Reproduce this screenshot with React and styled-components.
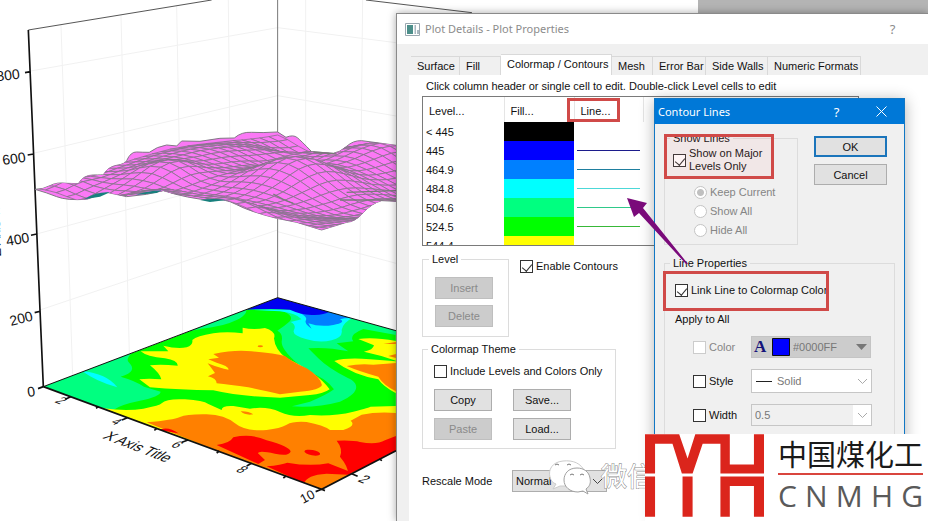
import React from "react";
import styled, { createGlobalStyle, css } from "styled-components";

const GlobalStyle = createGlobalStyle`
  * {
    box-sizing: border-box;
  }
  body {
    margin: 0;
    overflow: hidden;
    background: #fff;
  }
  body, button, input, select {
    font-family: "Liberation Sans", Arial, sans-serif;
    font-size: 11px;
    line-height: 14px;
    color: #111;
  }
`;

const Desktop = styled.main`
  position: relative;
  min-height: 100vh;
  overflow: hidden;
`;
const Drawing = styled.svg`
  position: absolute;
  top: 0;
  left: 0;
  overflow: visible;
  pointer-events: none;
`;
const Backdrop = styled.div`
  height: 13px;
  margin-left: 698px;
  background: #b4b4b4;
`;

const Window = styled.section`
  position: absolute;
  display: flex;
  flex-direction: column;
  background: #f0f0f0;
`;
const PlotWindow = styled(Window)`
  top: 13px;
  left: 396px;
  right: 0;
  bottom: 0;
  border: solid #8a8a8a;
  border-width: 1px 0 0 1px;
  box-shadow: 0 0 8px rgba(0, 0, 0, 0.35);
`;
const ContourWindow = styled(Window)`
  top: 98px;
  left: 654px;
  width: 251px;
  bottom: 0;
  border: 1px solid #1177c4;
  box-shadow: 0 2px 14px rgba(0, 0, 0, 0.3);
`;
const TitleBar = styled.header`
  display: flex;
  align-items: center;
  flex: none;
  height: ${props => (props.$active ? 25 : 30)}px;
  padding-left: ${props => (props.$active ? 3 : 8)}px;
  gap: 5px;
  background: ${props => (props.$active ? "#0078d7" : "#fff")};
  color: ${props => (props.$active ? "#fff" : "#8c8c8c")};
`;
const Title = styled.h1`
  flex: 1;
  margin: 0;
  font: 11px/16px "Noto Sans", "Open Sans", sans-serif;
`;
const TitleButton = styled.button`
  display: flex;
  align-items: center;
  justify-content: center;
  width: 45px;
  height: 25px;
  margin: 0 ${props => (props.$inset ? 13 : 0)}px 0 -5px;
  padding: 0;
  border: 0;
  background: none;
  color: inherit;
  font: 13px/16px "Noto Sans", sans-serif;
`;

const PlotBody = styled.div`
  display: flex;
  flex-direction: column;
  flex: 1;
  padding: 10px 0 0 12px;
`;
const Tabs = styled.div`
  display: flex;
  align-items: flex-end;
  height: 21px;
  padding-left: 2px;
`;
const Tab = styled.button`
  width: ${props => props.$width}px;
  height: 19px;
  padding: 0 0 0 6px;
  border: solid #d9d9d9;
  border-width: 1px 1px 0 0;
  background: #f0f0f0;
  text-align: left;
  white-space: nowrap;
  ${props =>
    props.$selected &&
    css`
      height: 21px;
      padding-bottom: 2px;
      background: #fff;
    `}
`;
const Panel = styled.div`
  flex: 1;
  padding: 4px 69px 0 13px;
  background: #fff;
`;
const Hint = styled.p`
  margin: 0 0 3px 4px;
  white-space: nowrap;
`;

const LevelList = styled.div`
  height: 150px;
  overflow: hidden;
  border: 1px solid #7a7a7a;
`;
const LevelTable = styled.table`
  border-collapse: collapse;
  table-layout: fixed;
  width: 220px;
`;
const HeadCell = styled.th`
  width: ${props => props.$width}px;
  height: 25px;
  padding: 2px 6px 0;
  border-right: 1px solid #e5e5e5;
  font-weight: normal;
  text-align: left;
`;
const LevelCell = styled.td`
  height: 19px;
  padding: 0 3px;
`;
const FillCell = styled(LevelCell)`
  background: ${props => props.$color};
`;
const LineSample = styled.hr`
  height: 1px;
  margin: 0;
  border: 0;
  background: ${props => props.$color};
`;

const Row = styled.div`
  display: flex;
  align-items: flex-start;
  gap: ${props => props.$gap || 0}px;
`;
const Group = styled.fieldset`
  min-width: 0;
  margin: 0;
  padding: 0 11px 8px;
  border: 1px solid #dcdcdc;
`;
const LevelGroup = styled(Group)`
  display: flex;
  flex-direction: column;
  gap: 6px;
  width: 87px;
  margin-top: 6px;
  padding: 11px 12px 9px;
`;
const ThemeGroup = styled(Group)`
  width: 194px;
  margin-top: 5px;
  padding-top: 9px;
`;
const ShowGroup = styled(Group)`
  width: 134px;
  padding: 2px 0 7px 8px;
`;
const LineGroup = styled(Group)`
  margin: 11px 0 0;
  height: 300px;
  padding: 14px 0 0 10px;
`;
const Legend = styled.legend`
  margin-left: ${props => props.$shift || 0}px;
  padding: 0 3px;
`;
const EnableField = styled.div`
  margin-top: 14px;
`;

const PushButton = styled.button`
  width: ${props => (props.$wide ? 73 : 58)}px;
  height: ${props => (props.$wide ? 21 : 22)}px;
  padding: 0;
  border: ${props => (props.$main ? "2px solid #1b75bb" : "1px solid #adadad")};
  background: #e1e1e1;
  &:disabled {
    border-color: #bfbfbf;
    background: #ccc;
    color: #8a8a8a;
  }
`;
const ButtonGrid = styled.div`
  display: grid;
  grid-template-columns: 58px 58px;
  gap: 7px 21px;
  margin-top: 11px;
`;
const ButtonColumn = styled.div`
  display: flex;
  flex-direction: column;
  gap: 7px;
  margin-top: 5px;
`;

const CheckLabel = styled.label`
  display: flex;
  align-items: center;
  gap: 3px;
  line-height: 13px;
  color: ${props => (props.$off ? "#858585" : "#111")};
`;
const CheckBox = styled.input.attrs({ type: "checkbox" })`
  appearance: none;
  position: relative;
  flex: none;
  width: 13px;
  height: 13px;
  margin: 0;
  border: 1px solid #333;
  background: #fff;
  &:checked::after {
    content: "";
    position: absolute;
    top: 1px;
    left: 3px;
    width: 5px;
    height: 8px;
    border: solid #333;
    border-width: 0 1px 1px 0;
    transform: rotate(40deg);
  }
  &:disabled {
    border-color: #ccc;
  }
`;
const RadioList = styled.div`
  display: flex;
  flex-direction: column;
  gap: 6px;
  margin: 13px 0 0 21px;
`;
const Radio = styled.input.attrs({ type: "radio" })`
  appearance: none;
  flex: none;
  width: 13px;
  height: 13px;
  margin: 0;
  border: 1px solid #c4c4c4;
  border-radius: 50%;
  background: #fff;
  &:checked {
    background: radial-gradient(#c0c0c0 0 3px, #fff 4px);
  }
`;

const Rescale = styled.div`
  display: flex;
  align-items: center;
  margin-top: 21px;
`;
const RescaleLabel = styled.label`
  width: 90px;
`;
const Picker = styled.div`
  position: relative;
  display: flex;
  align-items: center;
  width: ${props => props.$width}px;
  height: ${props => props.$height || 22}px;
  border: 1px solid ${props => props.$border || "#c6c6c6"};
  background: ${props => props.$fill || "#fff"};
`;
const PickerSelect = styled.select`
  appearance: none;
  flex: 1;
  min-width: 0;
  height: 100%;
  padding: 0 3px;
  border: 0;
  background: none;
  color: ${props => (props.$off ? "#777" : "#111")};
  opacity: 1;
`;
const Chevron = styled.svg`
  flex: none;
  margin-right: 3px;
`;

const ContourBody = styled.div`
  flex: 1;
  padding: 7px 9px 0;
`;
const ApplyTitle = styled.p`
  margin: 15px 0 10px;
`;
const ApplyRow = styled.div`
  display: flex;
  align-items: center;
  margin: 0 0 11px 18px;
`;
const ApplyLabel = styled(CheckLabel)`
  width: 58px;
`;

const WatermarkText = styled.text`
  font: 26px "Noto Sans CJK SC", sans-serif;
  fill: #fff;
  stroke: #8c8c8c;
  stroke-width: 1px;
  paint-order: stroke;
`;
const Brand = styled.footer`
  position: absolute;
  right: 0;
  bottom: 0;
  display: flex;
  align-items: flex-start;
  gap: 14px;
  height: 87px;
  padding-right: 5px;
  background: #fff;
`;
const BrandName = styled.div`
  font: 29px/38px "Noto Sans CJK SC", sans-serif;
  color: #1a1a1a;
  border-bottom: 2px solid #d9453e;
  height: 41px;
  white-space: nowrap;
`;
const BrandLatin = styled.div`
  display: flex;
  justify-content: space-between;
  font: 30px/42px "Open Sans", "Noto Sans", sans-serif;
  color: #5a5a5a;
`;

const AxisText = styled.text`
  font: ${props => props.$size || 14}px "Liberation Sans", sans-serif;
  fill: #111;
`;

const tabs = [
  { name: "Surface", width: 49 },
  { name: "Fill", width: 41 },
  { name: "Colormap / Contours", width: 111 },
  { name: "Mesh", width: 41 },
  { name: "Error Bar", width: 53 },
  { name: "Side Walls", width: 62 },
  { name: "Numeric Formats", width: 93 }
];

const levels = [
  { value: "< 445", fill: "#000" },
  { value: "445", fill: "#0000ff", line: "#1c1c8c" },
  { value: "464.9", fill: "#0080ff", line: "#1f7f9f" },
  { value: "484.8", fill: "#00ffff", line: "#4cd8d8" },
  { value: "504.6", fill: "#00ff80", line: "#2fc98a" },
  { value: "524.5", fill: "#00ff00", line: "#38b838" },
  { value: "544.4", fill: "#ffff00", line: "#c8c82a" }
];

// corners of the surface and its bumps, [u, v, height, spread u, spread v]
const corners = {
  left: [105, 568],
  front: [965, 690],
  back: [833, 404],
  right: [1650, 590]
};
const bumps = [
  [0.1, 0.55, 42, 0.16, 0.3],
  [0.5, 0.5, 90, 0.15, 0.17],
  [0.22, 0.3, 50, 0.1, 0.12],
  [0.45, 0, 52, 0.16, 0.12],
  [0.68, 0.02, 42, 0.12, 0.1],
  [0.18, 0.02, -22, 0.09, 0.08],
  [0.04, 0.1, 14, 0.06, 0.08],
  [0.12, 0.97, -36, 0.08, 0.14],
  [0.42, 0.95, 55, 0.13, 0.2],
  [0.8, 0.35, -22, 0.12, 0.16],
  [0.28, 0.7, -18, 0.09, 0.09],
  [0.75, 0.8, -30, 0.12, 0.2]
];

function surfacePoint(u, v) {
  const { left, front, back, right } = corners;
  const at = i =>
    left[i] * (1 - u) * (1 - v) +
    front[i] * u * (1 - v) +
    back[i] * (1 - u) * v +
    right[i] * u * v;
  const lift = bumps.reduce(
    (sum, [bu, bv, h, su, sv]) =>
      sum + h * Math.exp(-((u - bu) ** 2) / su ** 2 - (v - bv) ** 2 / sv ** 2),
    0
  );
  return `${Math.round(at(0))},${Math.round(at(1) - lift)}`;
}

const STEPS = 27;
const meshCells = [];
for (let j = STEPS - 1; j >= 0; j--) {
  for (let i = 0; i < STEPS; i++) {
    const [u, v, d] = [i / STEPS, j / STEPS, 1 / STEPS];
    meshCells.push(
      [
        surfacePoint(u, v),
        surfacePoint(u + d, v),
        surfacePoint(u + d, v + d),
        surfacePoint(u, v + d)
      ].join(" ")
    );
  }
}

const outline =
  "M105 568Q130 568 150 557T200 550L235 551Q250 525 280 525T310 524Q325 500 350 496T380 482Q392 455 410 456T448 457Q470 440 500 435L530 438 545 423 600 424 660 415 703 414Q725 395 755 397T833 396L858 412Q880 403 892 413T935 455L1000 460Q1020 457 1040 439T1085 422L1188 436V604L1145 602Q1115 610 1090 638T1040 667L965 690 890 667 830 655Q750 635 710 614T640 602Q560 595 490 572L440 583 380 590 320 577 260 598Q200 602 170 590T105 568Z";

function Surface() {
  return (
    <g>
      <clipPath id="surface">
        <path d={outline} />
      </clipPath>
      <path d={outline} fill="#fb78f6" stroke="#7f7884" strokeWidth="3" />
      <g
        clipPath="url(#surface)"
        fill="#fb78f6"
        stroke="#87758c"
        strokeWidth="2.4"
      >
        {meshCells.map((points, index) => (
          <polygon key={index} points={points} />
        ))}
      </g>
      <g fill="#17807d">
        <path d="M252 598Q290 574 330 577L300 590Z" />
        <path d="M405 585Q440 573 486 571L470 579Z" />
        <path d="M600 600Q640 594 680 600L630 606Z" />
      </g>
      <path
        d="M820 582Q850 600 880 610M940 456 1010 462M1020 600H1188M1040 577 1188 572"
        stroke="#7a7a7a"
        strokeWidth="4"
        fill="none"
      />
    </g>
  );
}

function FloorMap() {
  return (
    <g transform="translate(0 260)">
      <g transform="scale(0.3333)">
        <clipPath id="floor">
          <path d="M130 380 833 113 1188 212V572L965 688Z" />
        </clipPath>
        <g clipPath="url(#floor)">
          <path fill="#00ff00" d="M130 380 833 113 1188 212V572L965 688Z" />
          <path
            fill="#00ff80"
            d="M130 380 415 265Q375 292 385 305C405 325 400 338 362 350Q405 362 432 380L482 395Q480 410 420 422T340 450L300 460Z"
          />
          <path fill="#00ff80" d="M560 215 735 140Q750 160 710 180T605 206Z" />
          <path
            fill="#00ff80"
            d="M750 148 850 154Q885 170 868 185T832 212Q850 220 845 245C845 275 900 315 920 335Q975 350 1002 388Q980 405 930 425L876 439Q950 444 1020 425C1080 400 1080 370 1045 355Q985 325 955 295T925 265Q980 260 1045 274L1010 250 1060 244Q1045 225 1090 207L1188 225V200L990 140Z"
          />
          <path
            fill="#00ffff"
            d="M745 149 840 154Q890 160 905 178L872 186Q890 195 882 210T920 238Q960 250 995 241T1025 210Q1030 185 1065 172L980 150Z"
          />
          <path
            fill="#0080ff"
            d="M880 148Q925 170 918 180T935 206L925 190Q960 202 1000 195T1020 178Q1040 172 1060 175L980 145Z"
          />
          <path
            fill="#0000f0"
            d="M735 149 833 105 990 154Q970 167 935 165T870 149Q820 145 735 149Z"
          />
          <path fill="#00ffff" d="M246 333Q320 340 352 382 290 365 246 333Z" />
          <path
            fill="#ffff00"
            d="M422 274 505 274 490 257Q530 267 560 262 580 255 577 240 590 228 640 220 680 213 728 220V203Q760 210 795 204 830 215 822 235 825 270 860 295 955 340 989 388 970 402 930 405L840 413Q720 410 640 391 540 390 450 382L418 358Q445 354 484 358 480 340 450 316 480 312 533 317 535 302 495 295 440 290 422 274Z"
          />
          <path
            fill="#ff8000"
            d="M640 282Q700 270 740 273 820 278 855 288 880 308 920 325 960 350 966 375 960 390 900 395L840 403Q780 390 745 382 690 375 650 370 650 355 624 349L645 339Q635 325 623 310 660 325 685 329 690 320 650 308L625 298 657 293Z"
          />
          <ellipse cx="781" cy="259" rx="8" ry="3" fill="#ff8000" />
          <path
            fill="#ffff00"
            d="M310 445Q380 455 430 446T485 430Q500 415 555 418T625 432L665 450Q665 436 700 438L750 446Q800 438 840 456T930 465Q1000 470 1060 455T1110 440L1188 438V600L965 700Z"
          />
          <path
            fill="#ff8000"
            d="M440 487Q520 480 540 471T620 463Q675 465 705 490T800 510Q840 505 860 494T920 486Q970 495 990 510H1030Q1070 498 1052 482L1085 464Q1130 455 1188 459V590L965 700Z"
          />
          <path
            fill="#ff8000"
            d="M722 454Q745 453 760 463 735 467 722 454Z"
          />
          <g fill="#ff0000">
            <path d="M475 510Q505 497 535 520Z" />
            <path d="M650 555Q690 550 700 532 755 520 800 541 870 560 872 575 865 590 825 581 775 570 774 580L795 600 775 612Z" />
            <path d="M800 619Q845 615 862 608 930 620 985 610L1052 636 1060 645 980 641Q920 645 912 670Z" />
            <path d="M1010 542Q1060 540 1080 546 1130 555 1155 541L1188 528V580L1045 643Q1045 620 1020 590 1030 567 1010 542Z" />
            <ellipse
              cx="937"
              cy="578"
              rx="24"
              ry="8"
              transform="rotate(10 937 578)"
            />
          </g>
          <path
            fill="#ffff00"
            d="M1075 237Q1120 230 1188 243V302Q1140 285 1092 275 1120 270 1122 256Z"
          />
          <path
            fill="#ffff00"
            d="M1003 303Q1040 292 1110 298L1188 304V400Q1150 380 1135 358 1060 345 1003 303Z"
          />
          <path
            fill="#ff8000"
            d="M1040 318Q1080 310 1120 314L1188 309V394Q1150 375 1135 350 1080 335 1040 318Z"
          />
          <path fill="#ff8000" d="M1150 252H1188V246ZM1165 288 1188 282V294Z" />
        </g>
        <g stroke="#111" fill="none">
          <path d="M130 380 833 113 1188 212" strokeWidth="3" />
          <path d="M130 380 965 688 1188 572" strokeWidth="5" />
          <path
            d="M130 380 114 386M212 410 196 418M296 440 288 445M382 473 366 480M471 505 463 511M564 540 546 547M658 573 650 579M755 610 740 618M858 648 850 654M965 688 947 695M1055 641 1073 649M1138 597 1146 602M965 688 975 692"
            strokeWidth="5"
          />
        </g>
      </g>
    </g>
  );
}

function PlotDrawing() {
  return (
    <Drawing width="396" height="521" role="img" aria-label="3D surface plot">
      <g transform="scale(0.3333)">
        <g stroke="#f1f1f1" strokeWidth="3" fill="none">
          <path d="M183 75 218 1128M363 45 388 1060M530 18 548 1000M685 0 695 945M917 0V908M1088 0 1078 960" />
          <path d="M92 213 833 83 1188 128M100 460 833 287 1188 348M110 702 833 508M833 695 1188 790M120 930 833 690" />
        </g>
        <path
          d="M85 90 635 0M1098 0 1416 38"
          stroke="#555"
          strokeWidth="3"
        />
        <path d="M833 0V1120" stroke="#777" strokeWidth="3" />
        <path
          d="M85 90 97 370 108 640 120 930 130 1160M92 215 75 218M101 462 83 465M110 702 93 706M121 934 104 938"
          stroke="#111"
          strokeWidth="5"
          fill="none"
        />
        <Surface />
      </g>
      <FloorMap />
      <AxisText transform="translate(0 81) rotate(-7)" x="-3">
        800
      </AxisText>
      <AxisText transform="translate(3 165) rotate(-8)">600</AxisText>
      <AxisText transform="translate(7 246) rotate(-10)">400</AxisText>
      <AxisText transform="translate(11 326) rotate(-14)">200</AxisText>
      <AxisText transform="translate(28 397) rotate(-8)">0</AxisText>
      <AxisText transform="translate(1 256) rotate(-92)" $size={13}>
        Z Axis Title
      </AxisText>
      <AxisText
        transform="translate(102 438) rotate(21) skewX(-30)"
        $size={14}
      >
        X Axis Title
      </AxisText>
      <AxisText transform="translate(54 402) rotate(22) skewX(-35)" $size={12}>
        2
      </AxisText>
      <AxisText transform="translate(110 423) rotate(22) skewX(-35)" $size={11}>
        4
      </AxisText>
      <AxisText transform="translate(170 446) rotate(22) skewX(-35)" $size={12}>
        6
      </AxisText>
      <AxisText transform="translate(235 471) rotate(22) skewX(-35)" $size={12}>
        8
      </AxisText>
      <AxisText transform="translate(303 504) rotate(-28)" $size={13}>
        10
      </AxisText>
      <AxisText transform="translate(357 481) rotate(22) skewX(-30)" $size={13}>
        2
      </AxisText>
    </Drawing>
  );
}

function DownChevron({ color }) {
  return (
    <Chevron width="11" height="7" viewBox="0 0 11 7" aria-hidden="true">
      <path d="M1 1 5.500 5.500 10 1" fill="none" stroke={color} />
    </Chevron>
  );
}

function PlotDetails() {
  return (
    <PlotWindow aria-label="Plot Details">
      <TitleBar>
        <svg width="15" height="13" viewBox="0 0 15 13" aria-hidden="true">
          <path d="M.5.500h14v12H.5z" fill="#fff" stroke="#9aa8b0" />
          <path d="M2 2h6v9H2z" fill="#4c8f8a" />
          <path d="M9.500 2h1.500v9H9.500zM12 7h2v4h-2z" fill="#a9b8c0" />
        </svg>
        <Title>Plot Details - Plot Properties</Title>
        <TitleButton $inset aria-label="Help">
          ?
        </TitleButton>
      </TitleBar>
      <PlotBody>
        <Tabs role="tablist">
          {tabs.map((tab, index) => (
            <Tab
              key={tab.name}
              role="tab"
              aria-selected={index === 2}
              $selected={index === 2}
              $width={tab.width}
            >
              {tab.name}
            </Tab>
          ))}
        </Tabs>
        <Panel>
          <Hint>
            Click column header or single cell to edit. Double-click Level cells
            to edit
          </Hint>
          <LevelList>
            <LevelTable>
              <thead>
                <tr>
                  <HeadCell $width={81}>Level...</HeadCell>
                  <HeadCell $width={70}>Fill...</HeadCell>
                  <HeadCell $width={69}>Line...</HeadCell>
                </tr>
              </thead>
              <tbody>
                {levels.map(level => (
                  <tr key={level.value}>
                    <LevelCell>{level.value}</LevelCell>
                    <FillCell $color={level.fill} />
                    <LevelCell>
                      {level.line && <LineSample $color={level.line} />}
                    </LevelCell>
                  </tr>
                ))}
              </tbody>
            </LevelTable>
          </LevelList>
          <Row $gap={11}>
            <LevelGroup>
              <Legend $shift={-6}>Level</Legend>
              <PushButton disabled>Insert</PushButton>
              <PushButton disabled>Delete</PushButton>
            </LevelGroup>
            <EnableField>
              <CheckLabel>
                <CheckBox defaultChecked />
                Enable Contours
              </CheckLabel>
            </EnableField>
          </Row>
          <ThemeGroup>
            <Legend $shift={-6}>Colormap Theme</Legend>
            <CheckLabel>
              <CheckBox />
              Include Levels and Colors Only
            </CheckLabel>
            <ButtonGrid>
              <PushButton>Copy</PushButton>
              <PushButton>Save...</PushButton>
              <PushButton disabled>Paste</PushButton>
              <PushButton>Load...</PushButton>
            </ButtonGrid>
          </ThemeGroup>
          <Rescale>
            <RescaleLabel htmlFor="rescale">Rescale Mode</RescaleLabel>
            <Picker $width={95} $fill="#e1e1e1" $border="#adadad">
              <PickerSelect id="rescale">
                <option>Normal</option>
              </PickerSelect>
              <DownChevron color="#444" />
            </Picker>
          </Rescale>
        </Panel>
      </PlotBody>
    </PlotWindow>
  );
}

function ContourLines() {
  return (
    <ContourWindow aria-label="Contour Lines">
      <TitleBar $active>
        <Title>Contour Lines</Title>
        <TitleButton aria-label="Help">?</TitleButton>
        <TitleButton aria-label="Close">
          <svg width="11" height="11" viewBox="0 0 11 11">
            <path d="M.5.500l10 10M10.500.500l-10 10" stroke="#fff" />
          </svg>
        </TitleButton>
      </TitleBar>
      <ContourBody>
        <Row $gap={16}>
          <ShowGroup>
            <Legend $shift={-3}>Show Lines</Legend>
            <CheckLabel>
              <CheckBox defaultChecked />
              <span>
                Show on Major
                <br />
                Levels Only
              </span>
            </CheckLabel>
            <RadioList>
              {["Keep Current", "Show All", "Hide All"].map((name, index) => (
                <CheckLabel key={name} $off>
                  <Radio name="show" disabled defaultChecked={index === 0} />
                  {name}
                </CheckLabel>
              ))}
            </RadioList>
          </ShowGroup>
          <ButtonColumn>
            <PushButton $wide $main>
              OK
            </PushButton>
            <PushButton $wide>Cancel</PushButton>
          </ButtonColumn>
        </Row>
        <LineGroup>
          <Legend $shift={-5}>Line Properties</Legend>
          <CheckLabel>
            <CheckBox defaultChecked />
            Link Line to Colormap Color
          </CheckLabel>
          <ApplyTitle>Apply to All</ApplyTitle>
          <ApplyRow>
            <ApplyLabel $off>
              <CheckBox disabled />
              Color
            </ApplyLabel>
            <Picker $width={120} $fill="#ccc" $border="#c4c4c4">
              <svg width="38" height="20" viewBox="0 0 38 20">
                <text
                  x="2"
                  y="15"
                  fontFamily="Liberation Serif, serif"
                  fontSize="17"
                  fontWeight="bold"
                  fill="#14147a"
                >
                  A
                </text>
                <path d="M20.500 1.500h17v17h-17z" fill="#0000ff" stroke="#111" />
              </svg>
              <PickerSelect aria-label="Line color" $off disabled>
                <option>#0000FF</option>
              </PickerSelect>
              <Chevron width="11" height="6" viewBox="0 0 11 6">
                <path d="M0 0h11L5.500 6z" fill="#777" />
              </Chevron>
            </Picker>
          </ApplyRow>
          <ApplyRow>
            <ApplyLabel>
              <CheckBox />
              Style
            </ApplyLabel>
            <Picker $width={121} $height={24}>
              <svg width="22" height="20" viewBox="0 0 22 20">
                <path d="M4 10.500h16" stroke="#222" />
              </svg>
              <PickerSelect aria-label="Line style" $off disabled>
                <option>Solid</option>
              </PickerSelect>
              <DownChevron color="#aaa" />
            </Picker>
          </ApplyRow>
          <ApplyRow>
            <ApplyLabel>
              <CheckBox />
              Width
            </ApplyLabel>
            <Picker
              $width={121}
              $fill="linear-gradient(90deg, #f0f0f0 101px, #fff 101px)"
            >
              <PickerSelect aria-label="Line width" $off disabled>
                <option>0.5</option>
              </PickerSelect>
              <DownChevron color="#aaa" />
            </Picker>
          </ApplyRow>
        </LineGroup>
      </ContourBody>
    </ContourWindow>
  );
}

function Markup() {
  return (
    <Drawing width="928" height="521" aria-hidden="true">
      <g fill="none" stroke="#d04a48" strokeWidth="3">
        <path d="M568.500 99.500h50v21h-50z" />
        <path d="M665.500 135.500h107v42h-107z" fill="#ff8080" fillOpacity=".08" />
        <path d="M664.500 272.500h163v37h-163z" />
      </g>
      <path
        d="M627 198 647 203 643 208 688 264 686 264 639 213 634 217Z"
        fill="#7a0a7a"
      />
      <g fill="#fff" stroke="#a0a0a0">
        <path
          d="M563 461C552 462 548 470 550 477 551 481 553 483 556 484L553 489 560 486 568 486 585 472C581 463 573 460 563 461Z"
          stroke="#ccc"
        />
        <path d="M577 468C568 468 564 474 564 480 564 487 570 492 578 492L583 491 588 494 586 489C590 486 591 483 590 478 589 472 584 468 577 468Z" />
        <path
          d="M555 465q2-2 4 0M567 465q2-2 4 0M570 475q2-2 4 0M580 475q2-2 4 0"
          fill="none"
          stroke="#777"
        />
      </g>
      <WatermarkText x="601" y="486">
        微信
      </WatermarkText>
    </Drawing>
  );
}

function BrandMark() {
  return (
    <Brand>
      <svg width="119" height="83" viewBox="0 0 355 246" aria-label="MYH">
        <path
          fill="#db251c"
          d="M0 0H102L127 72 150 0H253V90H325V0H355V117H225V28H172L142 117H110L82 28H30V117H0ZM0 126H30V246H0ZM112 126H142V246H112ZM225 126H355V246H325V154H253V246H225Z"
        />
      </svg>
      <div>
        <BrandName>中国煤化工</BrandName>
        <BrandLatin>
          {"CNMHG".split("").map(letter => (
            <span key={letter}>{letter}</span>
          ))}
        </BrandLatin>
      </div>
    </Brand>
  );
}

export default function App() {
  return (
    <Desktop>
      <GlobalStyle />
      <Backdrop />
      <PlotDrawing />
      <PlotDetails />
      <ContourLines />
      <Markup />
      <BrandMark />
    </Desktop>
  );
}
